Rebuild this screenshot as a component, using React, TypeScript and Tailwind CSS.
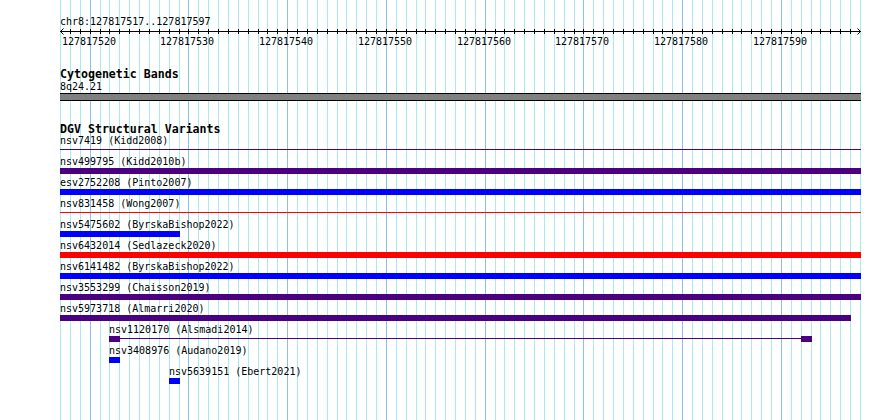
import React from "react";

const GRID = Array.from({ length: 82 }, (_, k) => ({
  k,
  x: Math.round(60 + (k * 800) / 81),
  major: (517 + k) % 10 === 0,
}));

const MAJORS = GRID.filter((g) => g.major).map((g) => ({ x: g.x, label: String(127817517 + g.k) }));

const MONO = { fontFamily: '"DejaVu Sans Mono", "Liberation Mono", monospace' } as const;

function Label({ children, className = "" }: { children: React.ReactNode; className?: string }) {
  return (
    <div className="h-[11px] text-[10px] leading-[11px] text-black whitespace-pre">
      <div className={"relative " + (className || "top-[1px]")}>{children}</div>
    </div>
  );
}

function Title({ children, className = "" }: { children: React.ReactNode; className?: string }) {
  return (
    <div className={"h-[13px] text-[11.6px] leading-[13px] font-bold text-black whitespace-pre " + className}>
      <div className="relative top-[2px]">{children}</div>
    </div>
  );
}

export default function App() {
  return (
    <div className="relative w-[890px] h-[420px] bg-white overflow-hidden" style={MONO}>
      <svg className="absolute left-0 top-0" width={890} height={420} shapeRendering="crispEdges">
        {GRID.map((g) => (
          <line
            key={g.k}
            x1={g.x + 0.5}
            x2={g.x + 0.5}
            y1={0}
            y2={420}
            stroke={g.major ? "#88c2e4" : "#a8eaee"}
            strokeWidth={1}
          />
        ))}
      </svg>

      <div className="relative flex flex-col w-[862px] pl-[60px] pt-[16px]">
        {/* Ruler */}
        <Label className="top-0">chr8:127817517..127817597</Label>
        <svg width={802} height={7} className="block overflow-visible" shapeRendering="crispEdges">
          <line x1={0} x2={801} y1={4.5} y2={4.5} stroke="#000" strokeWidth={1} />
          {GRID.slice(1, 81).map((g) => (
            <line key={g.k} x1={g.x - 60 + 0.5} x2={g.x - 60 + 0.5} y1={2} y2={7} stroke="#000" strokeWidth={1} />
          ))}
          <polyline points="3.5,1.5 0.5,4.5 3.5,7.5" fill="none" stroke="#000" strokeWidth={1} shapeRendering="auto" />
          <polyline points="797.5,1.5 800.5,4.5 797.5,7.5" fill="none" stroke="#000" strokeWidth={1} shapeRendering="auto" />
        </svg>
        <div className="relative h-[11px]">
          {MAJORS.map((m) => (
            <div
              key={m.label}
              className="absolute top-[2px] text-[10px] leading-[11px] text-black -translate-x-1/2"
              style={{ left: m.x - 60 - 1 }}
            >
              {m.label}
            </div>
          ))}
        </div>

        {/* Cytogenetic Bands */}
        <Title className="mt-[21px]">Cytogenetic Bands</Title>
        <Label className="top-[2px]">8q24.21</Label>
        <div className="mt-[3px] w-[801px] h-[8px] border-y border-black bg-[#808080]" />

        {/* DGV */}
        <Title className="mt-[20px]">DGV Structural Variants</Title>

        <div className="flex flex-col">
          {/* 1 */}
          <div className="h-[21px] flex flex-col">
            <Label>nsv7419 (Kidd2008)</Label>
            <div className="mt-[2px] h-[6px] pt-[2px]">
              <div className="w-[801px] h-px bg-[#4b0082]" />
            </div>
          </div>
          {/* 2 */}
          <div className="h-[21px] flex flex-col">
            <Label>nsv499795 (Kidd2010b)</Label>
            <div className="mt-[2px] w-[801px] h-[6px] bg-[#4b0082]" />
          </div>
          {/* 3 */}
          <div className="h-[21px] flex flex-col">
            <Label>esv2752208 (Pinto2007)</Label>
            <div className="mt-[2px] w-[801px] h-[6px] bg-[#0000ff]" />
          </div>
          {/* 4 */}
          <div className="h-[21px] flex flex-col">
            <Label>nsv831458 (Wong2007)</Label>
            <div className="mt-[2px] h-[6px] pt-[2px]">
              <div className="w-[801px] h-px bg-[#ff0000]" />
            </div>
          </div>
          {/* 5 */}
          <div className="h-[21px] flex flex-col">
            <Label>nsv5475602 (ByrskaBishop2022)</Label>
            <div className="mt-[2px] w-[120px] h-[6px] bg-[#0000ff]" />
          </div>
          {/* 6 */}
          <div className="h-[21px] flex flex-col">
            <Label>nsv6432014 (Sedlazeck2020)</Label>
            <div className="mt-[2px] w-[801px] h-[6px] bg-[#ff0000]" />
          </div>
          {/* 7 */}
          <div className="h-[21px] flex flex-col">
            <Label>nsv6141482 (ByrskaBishop2022)</Label>
            <div className="mt-[2px] w-[801px] h-[6px] bg-[#0000ff]" />
          </div>
          {/* 8 */}
          <div className="h-[21px] flex flex-col">
            <Label>nsv3553299 (Chaisson2019)</Label>
            <div className="mt-[2px] w-[801px] h-[6px] bg-[#4b0082]" />
          </div>
          {/* 9 */}
          <div className="h-[21px] flex flex-col">
            <Label>nsv5973718 (Almarri2020)</Label>
            <div className="mt-[2px] w-[791px] h-[6px] bg-[#4b0082]" />
          </div>
          {/* 10 */}
          <div className="h-[21px] flex flex-col pl-[49px]">
            <Label>nsv1120170 (Alsmadi2014)</Label>
            <div className="mt-[2px] h-[6px] flex items-start">
              <div className="w-[11px] h-[6px] bg-[#4b0082]" />
              <div className="mt-[2px] w-[681px] h-px bg-[#4b0082]" />
              <div className="w-[11px] h-[6px] bg-[#4b0082]" />
            </div>
          </div>
          {/* 11 */}
          <div className="h-[21px] flex flex-col pl-[49px]">
            <Label>nsv3408976 (Audano2019)</Label>
            <div className="mt-[2px] w-[11px] h-[6px] bg-[#0000ff]" />
          </div>
          {/* 12 */}
          <div className="h-[21px] flex flex-col pl-[109px]">
            <Label>nsv5639151 (Ebert2021)</Label>
            <div className="mt-[2px] w-[11px] h-[6px] bg-[#0000ff]" />
          </div>
        </div>
      </div>
    </div>
  );
}
